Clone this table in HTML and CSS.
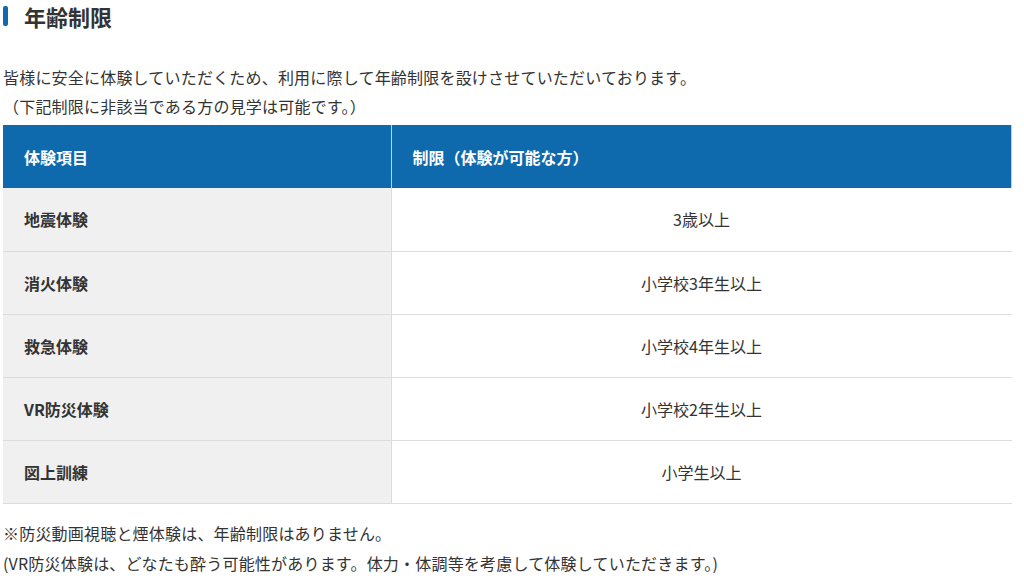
FILE: index.html
```html
<!DOCTYPE html>
<html lang="ja">
<head>
<meta charset="utf-8">
<link rel="stylesheet" href="styles.css">
</head>
<body>
<section class="page">
  <h2 class="title">年齢制限</h2>
  <div class="lead">
    <p>皆様に安全に体験していただくため、利用に際して年齢制限を設けさせていただいております。</p>
    <p>（下記制限に非該当である方の見学は可能です。）</p>
  </div>
  <table class="limits">
    <thead>
      <tr><th class="c1">体験項目</th><th class="c2">制限（体験が可能な方）</th></tr>
    </thead>
    <tbody>
      <tr><th>地震体験</th><td>3歳以上</td></tr>
      <tr><th>消火体験</th><td>小学校3年生以上</td></tr>
      <tr><th>救急体験</th><td>小学校4年生以上</td></tr>
      <tr><th>VR防災体験</th><td>小学校2年生以上</td></tr>
      <tr><th>図上訓練</th><td>小学生以上</td></tr>
    </tbody>
  </table>
  <div class="notes">
    <p>※防災動画視聴と煙体験は、年齢制限はありません。</p>
    <p>(VR防災体験は、どなたも酔う可能性があります。体力・体調等を考慮して体験していただきます。)</p>
  </div>
</section>
</body>
</html>
```
FILE: styles.css
```css
html, body {
  margin: 0;
  padding: 0;
  background: #fff;
}
body {
  font-family: "Noto Sans CJK JP", "Noto Sans", sans-serif;
  color: #333;
  font-size: 16px;
}
.page {
  padding: 0 12px 0 3px;
}
.title {
  margin: 0;
  padding: 1px 0 0 21px;
  font-size: 22px;
  line-height: 30px;
  font-weight: 700;
  color: #333;
  position: relative;
}
.title::before {
  content: "";
  position: absolute;
  left: 0;
  top: 6px;
  width: 5px;
  height: 20px;
  border-radius: 2px;
  background: #0f6aad;
}
.lead {
  margin-top: 32px;
}
.lead p, .notes p {
  margin: 0;
  line-height: 29px;
  font-size: 16px;
  letter-spacing: 0.2px;
}
.limits {
  margin-top: 4px;
  width: 100%;
  border-collapse: collapse;
  table-layout: fixed;
}
.limits th, .limits td {
  height: 63px;
  padding: 0 21px;
  font-size: 16px;
  line-height: 24px;
  box-sizing: border-box;
}
.limits thead th {
  background: #0f6aad;
  color: #fff;
  text-align: left;
  font-weight: 700;
  border-right: 1px solid #b5d5ee;
}
.limits thead th.c1 {
  width: 388px;
}
.limits tbody th {
  background: #f0f0f0;
  text-align: left;
  font-weight: 700;
  border-bottom: 1px solid #dcdcdc;
  border-right: 1px solid #dcdcdc;
}
.limits tbody td {
  text-align: center;
  border-bottom: 1px solid #dcdcdc;
  color: #333;
}
.notes {
  margin-top: 14px;
}
.notes p {
  line-height: 30px;
}
```
